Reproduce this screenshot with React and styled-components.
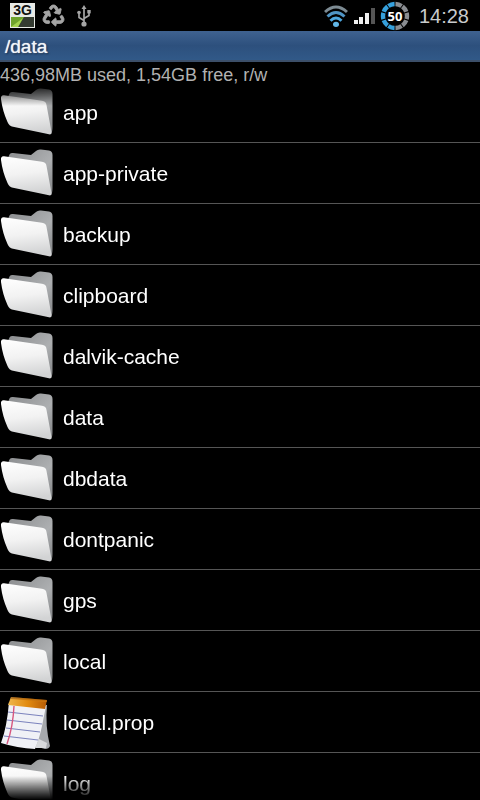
import React from 'react';
import styled, { createGlobalStyle } from 'styled-components';
import { FaRecycle } from 'react-icons/fa';

const GlobalStyle = createGlobalStyle`
  * { box-sizing: border-box; }
  body {
    margin: 0;
    background: #000;
    font-family: "Liberation Sans", Arial, Helvetica, sans-serif;
  }
`;

const Screen = styled.div`
  display: flex;
  flex-direction: column;
  height: 100vh;
  overflow: hidden;
  background: #000;
  color: #fff;
`;

const StatusBar = styled.header`
  display: flex;
  flex: none;
  align-items: center;
  justify-content: space-between;
  height: 31px;
  padding: 0 11px 0 10px;
`;

const StatusGroup = styled.div`
  display: flex;
  align-items: center;
  gap: ${({ $gap }) => $gap}px;

  svg { display: block; }
`;

const NetworkBadge = styled.span`
  display: flex;
  flex-direction: column;
  align-items: center;
  width: 25px;
  height: 25px;
  background: #e8eae6;
  color: #111;
  font-size: 14px;
  font-weight: bold;
  line-height: 14px;
`;

const Clock = styled.time`
  padding-left: 4px;
  color: #c9cbcd;
  font-size: 20px;
  line-height: 30px;
`;

const PathBar = styled.h1`
  flex: none;
  height: 31px;
  margin: 0;
  padding: 0 5px;
  border-bottom: 2px solid #3c4f69;
  background: linear-gradient(#3f6290, #2d507d 50%, #315988);
  color: #f1f5fa;
  font-size: 19px;
  font-weight: normal;
  line-height: 32px;
  text-shadow: 0 0 1px #f1f5fa, 1px 1px 2px #10233c;
`;

const Usage = styled.p`
  flex: none;
  margin: 0;
  height: 20px;
  color: #b2b2b2;
  font-size: 18px;
  line-height: 26px;
  white-space: nowrap;
`;

const ListViewport = styled.main`
  flex: 1;
  min-height: 0;
  overflow: hidden;
  mask-image: linear-gradient(transparent, #000 24px, #000 calc(100% - 24px), transparent);
`;

const FileList = styled.ul`
  margin: 0;
  padding: 0;
  list-style: none;
`;

const FileItem = styled.li`
  border-bottom: 1px solid #555;
`;

const FileButton = styled.button`
  display: flex;
  align-items: center;
  gap: 8px;
  width: 100%;
  height: 60px;
  padding: 0;
  border: 0;
  background: none;
  color: #fff;
  font-family: inherit;
  font-size: 21px;
  line-height: 24px;
  text-align: left;

  svg { flex: none; }
`;

const FileName = styled.span`
  padding-top: 2px;
`;

const RecycleIcon = styled(FaRecycle)`
  stroke: #a5a5a5;
  stroke-width: 22px;
  overflow: visible;
`;

const UsbIcon = () => (
  <svg width="24" height="22" viewBox="-5 0 24 22" fill="none" stroke="#a5a5a5" strokeWidth="1.7" aria-hidden="true">
    <path d="M7 3V18M7 15.5L2 12.5V8M7 13.5L12 10.5V7" />
    <path d="M7 0L9.5 4H4.5Z" fill="#a5a5a5" stroke="none" />
    <circle cx="7" cy="19" r="2.6" fill="#a5a5a5" stroke="none" />
    <circle cx="2" cy="7.5" r="1.8" fill="#a5a5a5" stroke="none" />
    <rect x="10.3" y="5" width="3.4" height="3.4" fill="#a5a5a5" stroke="none" />
  </svg>
);

const ChargeIcon = () => (
  <svg width="23" height="10" viewBox="0 0 23 10" aria-hidden="true">
    <rect width="23" height="10" fill="#343b31" />
    <path d="M0 0H13L7 10H0Z" fill="#6fa32c" />
    <path d="M0 10L12 1L7 10Z" fill="#a4d24f" />
  </svg>
);

const WifiIcon = () => (
  <svg width="24" height="24" viewBox="0 -1 24 24" fill="none" strokeWidth="3" aria-hidden="true">
    <path d="M1 7Q12-3 23 7" stroke="#7d8b93" />
    <path d="M3.5 11.5Q12 3.5 20.5 11.5" stroke="#4f94c4" />
    <path d="M6.5 15.8Q12 10.3 17.5 15.8" stroke="#4da7df" />
    <ellipse cx="12" cy="19.3" rx="3" ry="2.6" fill="#61b6e7" />
  </svg>
);

const SignalIcon = () => (
  <svg width="22" height="18" viewBox="-1 -1 22 18" aria-hidden="true">
    <path d="M0 12H4V16H0ZM5 9H9V16H5ZM11 5H15V16H11Z" fill="#f0f0f0" />
    <rect x="17" width="4" height="16" fill="#555" />
  </svg>
);

const BatteryIcon = () => (
  <svg width="30" height="30" viewBox="0 0 30 30" role="img" aria-label="Battery 50%">
    <g fill="none" strokeWidth="4.4">
      <path d="M15 3A12 12 0 0 1 15 27" pathLength="50" stroke="#8a8d91" strokeDasharray="8.7 1.3" strokeDashoffset="-.65" />
      <path d="M15 27A12 12 0 0 1 15 3" pathLength="50" stroke="#36a0dc" strokeDasharray="8.7 1.3" strokeDashoffset="-.65" />
    </g>
    <text x="15" y="20" textAnchor="middle" fill="#fff" fontFamily="Open Sans, sans-serif" fontSize="13" fontWeight="700">50</text>
  </svg>
);

const FolderIcon = () => (
  <svg width="55" height="60" viewBox="0 0 55 60" aria-hidden="true">
    <defs>
      <linearGradient id="folderBack" x1="0" y1="0" x2="1" y2="1">
        <stop stopColor="#8a8c8e" />
        <stop offset=".6" stopColor="#adafb1" />
        <stop offset="1" stopColor="#808284" />
      </linearGradient>
      <linearGradient id="folderFront" x1="0" y1="0" x2=".15" y2="1">
        <stop stopColor="#fff" />
        <stop offset=".5" stopColor="#f2f2f2" />
        <stop offset="1" stopColor="#d2d3d4" />
      </linearGradient>
    </defs>
    <path d="M8 15L9.5 11.5Q10 9.5 13 10L31 12L36 8Q38 6 41 6.5L49 7.5Q52.5 8 52.5 12V45Q52.5 50 51 52L10 42Z" fill="url(#folderBack)" />
    <path d="M1 17Q.6 13 4 13.3L42 18.7Q46 19.2 46.5 23L51.5 50Q52 53 49 52.3L13 44.8Q9 44 7.5 40Q2.5 29 1 17Z" fill="url(#folderFront)" />
  </svg>
);

const NoteIcon = () => (
  <svg width="55" height="60" viewBox="0 0 55 60" aria-hidden="true">
    <defs>
      <linearGradient id="noteTop" x1="0" y1="0" x2="1" y2="0">
        <stop stopColor="#efb64d" />
        <stop offset=".5" stopColor="#e28b10" />
        <stop offset="1" stopColor="#b45a05" />
      </linearGradient>
      <linearGradient id="noteBinding" x1="0" y1="0" x2="0" y2="1">
        <stop stopColor="#5b2505" />
        <stop offset="1" stopColor="#e99518" />
      </linearGradient>
    </defs>
    <path d="M40 12L47 13Q45 34 50 54Q49 57 45 57L34 54Z" fill="#a6a9ad" />
    <path d="M9 10L46 14L42 34Q39 48 35 57Q17 56 1 51Q7 35 9 10Z" fill="#f0f1f6" />
    <path d="M39 47L47 51L46 56L35 56Z" fill="#d8dadd" />
    <path d="M11 5L47 8L45 17L8 13Z" fill="url(#noteTop)" />
    <path d="M11 5L47 8V10L11 7Z" fill="url(#noteBinding)" opacity=".5" />
    <path d="M8 20L43 24M7 28L42 32M6 36L40 40M4 44L38 48" stroke="#7c83bd" strokeWidth="1.2" />
    <path d="M14 14Q13 35 7 52" fill="none" stroke="#d7557e" strokeWidth="1.4" />
  </svg>
);

const files = [
  'app', 'app-private', 'backup', 'clipboard', 'dalvik-cache', 'data',
  'dbdata', 'dontpanic', 'gps', 'local', 'local.prop', 'log',
];

export default function App() {
  return (
    <Screen>
      <GlobalStyle />
      <StatusBar>
        <StatusGroup $gap={8}>
          <NetworkBadge>3G<ChargeIcon /></NetworkBadge>
          <RecycleIcon size={21} color="#a5a5a5" aria-hidden="true" />
          <UsbIcon />
        </StatusGroup>
        <StatusGroup $gap={5}>
          <WifiIcon />
          <SignalIcon />
          <BatteryIcon />
          <Clock>14:28</Clock>
        </StatusGroup>
      </StatusBar>
      <PathBar>/data</PathBar>
      <Usage>436,98MB used, 1,54GB free, r/w</Usage>
      <ListViewport>
        <FileList>
          {files.map((name) => (
            <FileItem key={name}>
              <FileButton type="button">
                {name.includes('.') ? <NoteIcon /> : <FolderIcon />}
                <FileName>{name}</FileName>
              </FileButton>
            </FileItem>
          ))}
        </FileList>
      </ListViewport>
    </Screen>
  );
}
